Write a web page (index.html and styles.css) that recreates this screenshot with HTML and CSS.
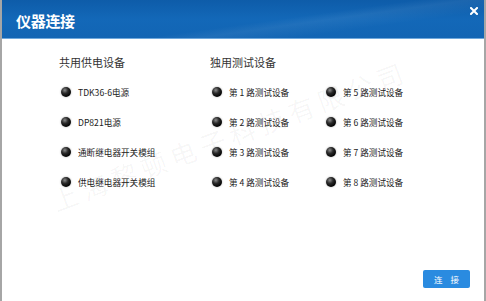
FILE: index.html
```html
<!DOCTYPE html>
<html lang="zh-CN">
<head>
  <meta charset="UTF-8" />
  <title>仪器连接</title>
  <link rel="stylesheet" href="styles.css">
</head>
<body>

<div class="window">
  <div class="title-bar">
    <span class="title">仪器连接</span>
    <svg class="close" width="8" height="8" viewBox="0 0 8 8">
      <path d="M1 1 L7 7 M7 1 L1 7" stroke="#fff" stroke-width="2" stroke-linecap="square" />
    </svg>
  </div>

  <div class="content">
    <div class="watermark">上海黎顿电子科技有限公司</div>

    <div class="columns">
      <div class="col col-power">
        <div class="col-head">共用供电设备</div>
        <div class="item"><span class="led"></span>TDK36-6电源</div>
        <div class="item"><span class="led"></span>DP821电源</div>
        <div class="item"><span class="led"></span>通断继电器开关模组</div>
        <div class="item"><span class="led"></span>供电继电器开关模组</div>
      </div>

      <div class="col col-test">
        <div class="col-head">独用测试设备</div>
        <div class="item"><span class="led"></span>第 1 路测试设备</div>
        <div class="item"><span class="led"></span>第 2 路测试设备</div>
        <div class="item"><span class="led"></span>第 3 路测试设备</div>
        <div class="item"><span class="led"></span>第 4 路测试设备</div>
      </div>

      <div class="col col-test2">
        <div class="col-head"></div>
        <div class="item"><span class="led"></span>第 5 路测试设备</div>
        <div class="item"><span class="led"></span>第 6 路测试设备</div>
        <div class="item"><span class="led"></span>第 7 路测试设备</div>
        <div class="item"><span class="led"></span>第 8 路测试设备</div>
      </div>
    </div>

    <div class="footer">
      <button class="btn-connect">连 接</button>
    </div>
  </div>
</div>

</body>
</html>
```

FILE: styles.css
```css
body {
  margin: 0;
  font-family: "Noto Sans CJK SC", "Noto Sans", sans-serif;
  background: #fff;
  color: #333;
}

.window {
  width: 486px;
  height: 301px;
  box-sizing: border-box;
  border-left: 2px solid #a6a6a6;
  border-right: 2px solid #a6a6a6;
  display: flex;
  flex-direction: column;
  overflow: hidden;
}

.title-bar {
  height: 38px;
  flex-shrink: 0;
  display: flex;
  align-items: center;
  justify-content: space-between;
  margin: 0 -2px;
  padding: 0 8px 0 14px;
  background:
    linear-gradient(172deg, rgba(255,255,255,0) 55%, rgba(255,255,255,0.06) 62%, rgba(255,255,255,0) 75%),
    linear-gradient(180deg, #0e5ca9 0%, #1368b8 50%, #1265b4 100%);
  border-bottom: 1px solid #6fa8dc;
  border-left: 2px solid #0b4f93;
  border-right: 2px solid #0b4f93;
}

.title {
  color: #fff;
  font-size: 15px;
  font-weight: bold;
  letter-spacing: -0.3px;
  margin-top: 2px;
}

.close {
  align-self: flex-start;
  margin-top: 7px;
  margin-right: -2px;
}

.content {
  flex: 1;
  position: relative;
  display: flex;
  flex-direction: column;
  padding: 8px 0 0 57px;
}

.watermark {
  position: absolute;
  left: 44px;
  top: 145px;
  font-size: 26px;
  letter-spacing: 5.5px;
  color: rgba(0, 0, 0, 0.04);
  transform: rotate(-20.5deg);
  transform-origin: left top;
  white-space: nowrap;
  pointer-events: none;
}

.columns {
  display: flex;
}

.col-power { width: 151px; }
.col-test { width: 114px; }

.col-head {
  height: 30px;
  line-height: 30px;
  font-size: 11px;
  color: #333;
}

.item {
  height: 30px;
  display: flex;
  align-items: center;
  gap: 7px;
  font-size: 8.6px;
  color: #222;
  padding-left: 2px;
}

.led {
  width: 10px;
  height: 10px;
  border-radius: 50%;
  background: radial-gradient(circle at 38% 32%, #8a8a8a 0, #2a2a2a 35%, #050505 70%, #000 100%);
  box-shadow: 0 0 2px rgba(0, 0, 0, 0.35);
  flex-shrink: 0;
}

.footer {
  margin-top: auto;
  display: flex;
  justify-content: flex-end;
  padding: 0 14px 13px 0;
}

.btn-connect {
  width: 47px;
  height: 18px;
  border: none;
  border-radius: 2px;
  background: #2a8be0;
  color: #fff;
  font-family: "Noto Sans CJK SC", sans-serif;
  font-size: 8.5px;
  letter-spacing: 3px;
  text-indent: 3px;
  padding: 0;
  cursor: pointer;
}
```
